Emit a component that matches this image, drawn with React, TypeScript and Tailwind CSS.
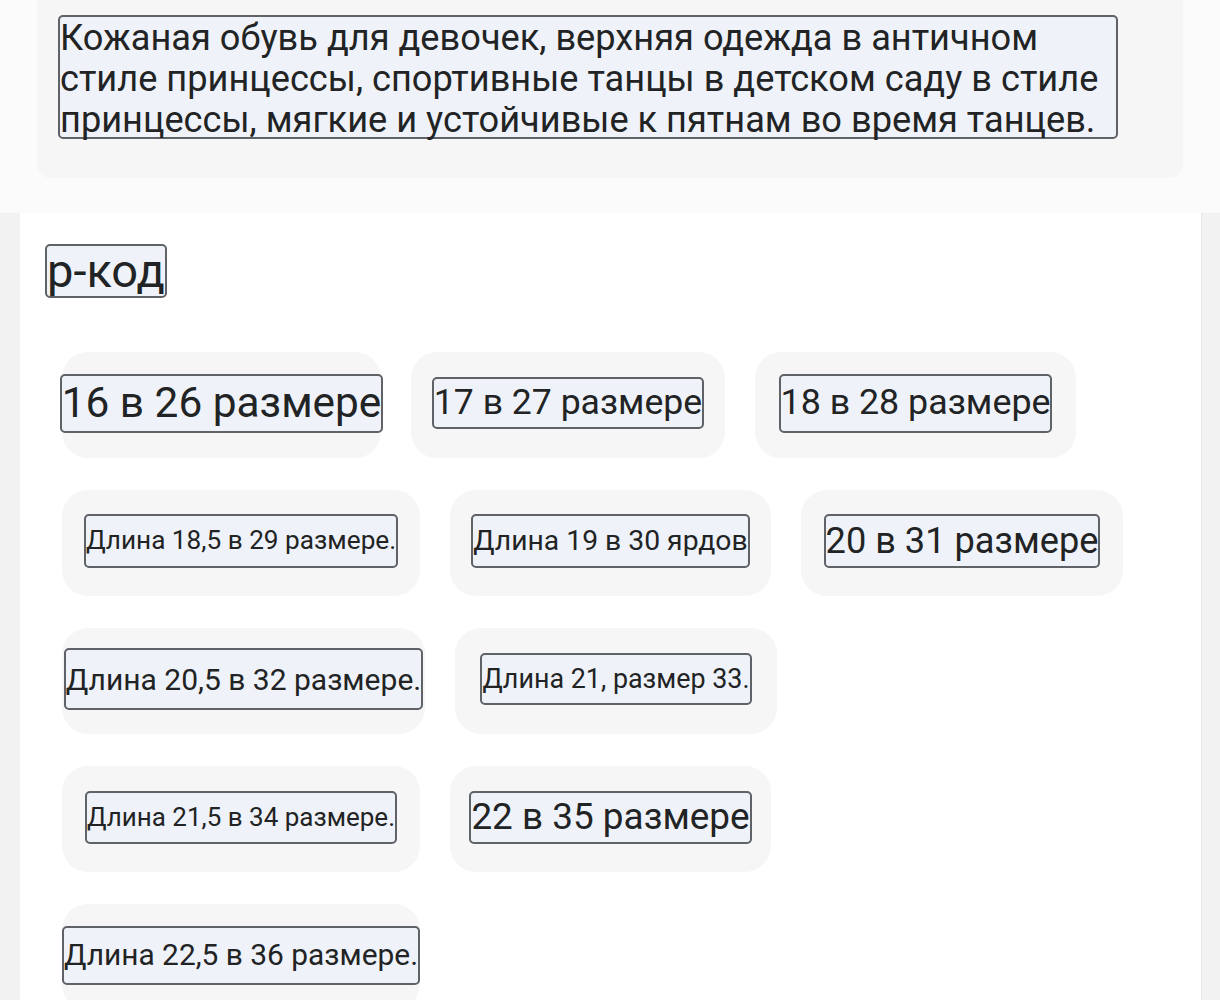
import React from 'react';

type Chip = { w: number; label: string; fs: number; h: number };

// size chips, laid out row by row as in the shop page
const rows: Chip[][] = [
  [
    { w: 319, label: '16 в 26 размере', fs: 42.4, h: 59 },
    { w: 314, label: '17 в 27 размере', fs: 35.6, h: 52 },
    { w: 321, label: '18 в 28 размере', fs: 35.8, h: 59 },
  ],
  [
    { w: 358, label: 'Длина 18,5 в 29 размере.', fs: 26.2, h: 54 },
    { w: 321, label: 'Длина 19 в 30 ярдов', fs: 28.3, h: 54 },
    { w: 322, label: '20 в 31 размере', fs: 36.2, h: 54 },
  ],
  [
    { w: 363, label: 'Длина 20,5 в 32 размере.', fs: 30, h: 62 },
    { w: 322, label: 'Длина 21, размер 33.', fs: 26.9, h: 52 },
  ],
  [
    { w: 358, label: 'Длина 21,5 в 34 размере.', fs: 26, h: 53 },
    { w: 321, label: '22 в 35 размере', fs: 36.9, h: 53 },
  ],
  [{ w: 358, label: 'Длина 22,5 в 36 размере.', fs: 29.9, h: 59 }],
];

const font = { fontFamily: 'Roboto, "Noto Sans", sans-serif' };

const App = () => {
  return (
    <div className="min-h-[1000px] bg-[#fbfbfb] text-[#222324]" style={font}>
      {/* Title card */}
      <div className="pl-[37px]">
        <div className="w-[1146px] h-[178px] bg-[#f6f6f7] rounded-b-[14px] pt-[15px] pl-[21px]">
          <div className="w-[1060px] h-[124px] border-2 border-[#5f6266] rounded-[5px] bg-[#eff3f9] text-[36.2px] leading-[41px] whitespace-nowrap">
            Кожаная обувь для девочек, верхняя одежда в античном
            <br />
            стиле принцессы, спортивные танцы в детском саду в стиле
            <br />
            принцессы, мягкие и устойчивые к пятнам во время танцев.
          </div>
        </div>
      </div>

      {/* Options panel */}
      <div className="flex mt-[35px]">
        <div className="w-[20px] bg-[#f2f2f2]" />
        <div className="w-[1181px] bg-white pt-[31px] pb-[20px]">
          <div className="pl-[25px]">
            <div className="inline-flex items-center h-[54px] w-[122px] border-2 border-[#5f6266] rounded-[5px] bg-[#eff3f9] text-[47px] leading-[54px] whitespace-nowrap">
              р-код
            </div>
          </div>

          <div className="flex flex-col gap-[32px] mt-[54px] pl-[42px]">
            {rows.map((row, i) => (
              <div key={i} className="flex gap-[30px]">
                {row.map((chip) => (
                  <div
                    key={chip.label}
                    className="h-[106px] rounded-[26px] bg-[#f6f6f7] flex items-center justify-center"
                    style={{ width: chip.w }}
                  >
                    <div
                      className="shrink-0 whitespace-nowrap flex items-center border-2 border-[#5f6266] rounded-[5px] bg-[#eff3f9] -mt-[4px]"
                      style={{ fontSize: chip.fs, height: chip.h }}
                    >
                      {chip.label}
                    </div>
                  </div>
                ))}
              </div>
            ))}
          </div>
        </div>
        <div className="w-[19px] bg-[#f2f2f2] border-l border-[#e8e8e8]" />
      </div>
    </div>
  );
};

export default App;
